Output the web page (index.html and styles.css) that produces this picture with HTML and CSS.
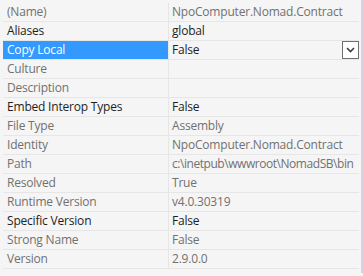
FILE: index.html
```html
<!DOCTYPE html>
<html lang="en">
<head>
    <meta charset="UTF-8">
    <title>Properties</title>
    <link rel="stylesheet" href="styles.css">
</head>
<body>
    <div class="grid">
        <div class="row"><div class="name">(Name)</div><div class="value">NpoComputer.Nomad.Contract</div></div>
        <div class="row set"><div class="name">Aliases</div><div class="value">global</div></div>
        <div class="row set selected">
            <div class="name">Copy Local</div>
            <div class="value">False
                <span class="drop">
                    <svg width="9" height="6" viewBox="0 0 9 6"><path d="M1 1 L4.5 4.5 L8 1" fill="none" stroke="#3c3c3c" stroke-width="1.6"/></svg>
                </span>
            </div>
        </div>
        <div class="row"><div class="name">Culture</div><div class="value"></div></div>
        <div class="row"><div class="name">Description</div><div class="value"></div></div>
        <div class="row set"><div class="name">Embed Interop Types</div><div class="value">False</div></div>
        <div class="row"><div class="name">File Type</div><div class="value">Assembly</div></div>
        <div class="row"><div class="name">Identity</div><div class="value">NpoComputer.Nomad.Contract</div></div>
        <div class="row"><div class="name">Path</div><div class="value path">c:\inetpub\wwwroot\NomadSB\bin</div></div>
        <div class="row"><div class="name">Resolved</div><div class="value">True</div></div>
        <div class="row"><div class="name">Runtime Version</div><div class="value">v4.0.30319</div></div>
        <div class="row set"><div class="name">Specific Version</div><div class="value">False</div></div>
        <div class="row"><div class="name">Strong Name</div><div class="value">False</div></div>
        <div class="row"><div class="name">Version</div><div class="value">2.9.0.0</div></div>
    </div>
</body>
</html>
```

FILE: styles.css
```css
body {
    margin: 0;
    width: 363px;
    height: 276px;
    overflow: hidden;
    background-color: #f5f5f5;
    font-family: "Open Sans", "Noto Sans", sans-serif;
    font-size: 12px;
    letter-spacing: -0.2px;
    color: #717171;
}
.grid {
    padding: 3px 2px 0 3px;
    border-right: 2px solid #d4d4e2;
    height: 273px;
    box-sizing: border-box;
    width: 363px;
}
.row {
    display: grid;
    grid-template-columns: 165px 1fr;
    height: 18px;
    border-bottom: 1px solid #e6e6e6;
}
.name {
    padding-left: 4px;
    line-height: 18px;
    white-space: nowrap;
    overflow: hidden;
}
.value {
    position: relative;
    border-left: 1px solid #e6e6e6;
    padding-left: 3px;
    line-height: 18px;
    white-space: nowrap;
    overflow: hidden;
}
.value.path {
    letter-spacing: -0.45px;
}
.set .name, .set .value {
    color: #1e1e1e;
}
.selected .name {
    background-color: #3399ff;
    color: #ffffff;
}
.drop {
    position: absolute;
    right: 0;
    top: 0;
    width: 15px;
    height: 16px;
    border: 1px solid #707070;
    background: #ffffff;
    display: flex;
    align-items: center;
    justify-content: center;
}
```
